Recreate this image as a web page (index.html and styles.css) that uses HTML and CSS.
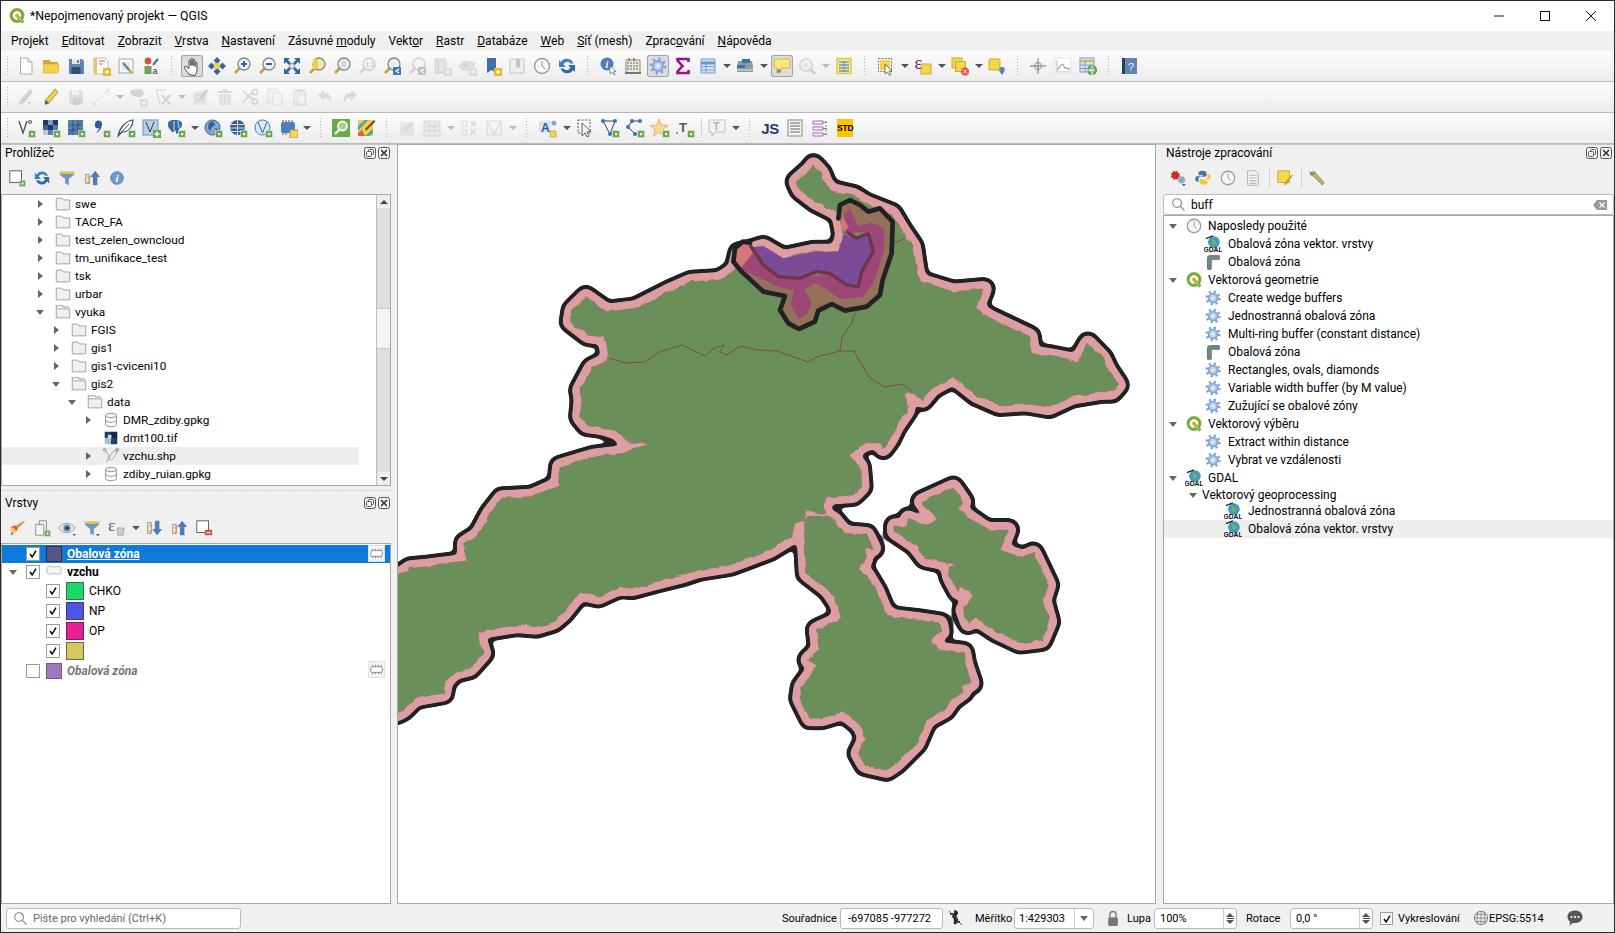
FILE: index.html
```html
<!DOCTYPE html>
<html lang="cs">
<head>
<meta charset="utf-8">
<title>*Nepojmenovaný projekt — QGIS</title>
<link rel="stylesheet" href="styles.css">
</head>
<body>
<svg class="defs" width="0" height="0">
<defs>
<symbol id="bg" viewBox="0 0 20 20"><rect x="12.500" y="12.500" width="7" height="7" fill="#6aa84f" stroke="#dfe8d8" stroke-width=".6"/><rect x="15" y="15" width="2.200" height="2.200" fill="#fff"/></symbol>
<symbol id="bgold" viewBox="0 0 20 20"><rect x="12" y="12" width="8" height="8" fill="#e5b92e"/><circle cx="16" cy="16" r="1.800" fill="#fff"/></symbol>
<symbol id="logo" viewBox="0 0 20 20"><circle cx="10" cy="9.500" r="6.500" fill="#fff" stroke="#7cae3a" stroke-width="3.600"/><path d="M11 11l6 6" stroke="#7cae3a" stroke-width="3.400"/><circle cx="10" cy="9.500" r="2.200" fill="#e8a33a"/><path d="M12 12l3 3" stroke="#fff" stroke-width="1"/></symbol>
<symbol id="new" viewBox="0 0 20 20"><path d="M4.500 2h7.500l4 4v12H4.500z" fill="#fff" stroke="#aaa"/><path d="M12 2v4h4" fill="#eee" stroke="#aaa"/></symbol>
<symbol id="open" viewBox="0 0 20 20"><path d="M2 4h6l2 2h7v3H2z" fill="#d6a52a"/><path d="M2 17l1-9h15l-1 9z" fill="#f7d04e" stroke="#d3a92e" stroke-width=".6"/></symbol>
<symbol id="save" viewBox="0 0 20 20"><path d="M3 3h13l2 2v13H3z" fill="#5f86b6"/><path d="M6 3h8v5H6z" fill="#e1e8f1"/><path d="M5.500 11h9v7h-9z" fill="#2e4e76"/><path d="M11 4h2v3h-2z" fill="#5f86b6"/></symbol>
<symbol id="saveas" viewBox="0 0 20 20"><path d="M3 2h11l3 3v13H3z" fill="#fff" stroke="#bbb"/><path d="M3 2h3v16H3z" fill="#e7c75a"/><path d="M8 5h6M8 8h4" stroke="#c55" stroke-width="1"/><use href="#bgold"/></symbol>
<symbol id="layout" viewBox="0 0 20 20"><path d="M3 3h14v14H3z" fill="#f8f8f8" stroke="#9aa"/><path d="M6 6h8v8H6z" fill="#dde6f2"/><path d="M7 7l7 8" stroke="#777" stroke-width="2"/><path d="M13 14l3 3" stroke="#c9a227" stroke-width="2"/></symbol>
<symbol id="style" viewBox="0 0 20 20"><circle cx="7" cy="5" r="3.400" fill="#c9583a"/><rect x="3.500" y="10" width="7" height="8" fill="#6e9f64"/><path d="M12 9l5-6" stroke="#3a6ea5" stroke-width="2"/><text x="11.500" y="18" font-size="9" font-family="Liberation Sans" fill="#333">a</text></symbol>
<symbol id="pan" viewBox="0 0 20 20"><path d="M7 18.500c-1-2.500-4.500-5-4.500-7.300 0-1 1.500-1.200 2.500-.2L7 12.500V5c0-1.400 2-1.400 2 0v4.500-6c0-1.400 2-1.400 2 0v6-5c0-1.400 2-1.400 2 0v6-3c0-1.300 2-1.300 2 0v6.500c0 2-1 3.500-2 5.500z" fill="#fff" stroke="#333" stroke-width=".9"/></symbol>
<symbol id="pansel" viewBox="0 0 20 20"><path d="M10 1l3.500 3.500L10 8 6.500 4.500zM10 12l3.500 3.500L10 19l-3.500-3.500zM1 10l3.500-3.500L8 10l-3.500 3.500zM12 10l3.500-3.500L19 10l-3.500 3.500z" fill="#2f66ad"/><rect x="7" y="7" width="6" height="6" fill="#f3d34a"/></symbol>
<symbol id="mag" viewBox="0 0 20 20"><path d="M8 12l-5 5" stroke="#c3a13a" stroke-width="2.600"/><circle cx="12" cy="8" r="6" fill="#eaf0f7" stroke="#888" stroke-width="1.300"/></symbol>
<symbol id="zin" viewBox="0 0 20 20"><use href="#mag"/><path d="M9 8h6M12 5v6" stroke="#2f66ad" stroke-width="2"/></symbol>
<symbol id="zout" viewBox="0 0 20 20"><use href="#mag"/><path d="M9 8h6" stroke="#2f66ad" stroke-width="2"/></symbol>
<symbol id="zfull" viewBox="0 0 20 20"><path d="M2 2h6L6 4l3 3-2 2-3-3-2 2zM18 2v6l-2-2-3 3-2-2 3-3-2-2zM2 18v-6l2 2 3-3 2 2-3 3 2 2zM18 18h-6l2-2-3-3 2-2 3 3 2-2z" fill="#2f66ad"/><circle cx="10" cy="10" r="2.500" fill="#eaf0f7" stroke="#888"/></symbol>
<symbol id="zsel" viewBox="0 0 20 20"><path d="M8 12l-5 5" stroke="#c3a13a" stroke-width="2.600"/><circle cx="12" cy="8" r="6" fill="#f4e7a8" stroke="#888" stroke-width="1.300"/><path d="M6 3h5v10H6z" fill="#f0cf44"/></symbol>
<symbol id="zlay" viewBox="0 0 20 20"><use href="#mag"/><path d="M9 5h5v6H9z" fill="#cfd6dc"/></symbol>
<symbol id="znat" viewBox="0 0 20 20"><use href="#mag"/><text x="8.500" y="10.500" font-size="6.500" font-family="Liberation Sans" fill="#555">1:1</text></symbol>
<symbol id="zlast" viewBox="0 0 20 20"><use href="#mag"/><rect x="11" y="11" width="8" height="8" fill="#3b78bd"/><path d="M17 13l-3 2 3 2" fill="none" stroke="#fff" stroke-width="1.300"/></symbol>
<symbol id="mapv" viewBox="0 0 20 20"><path d="M3 3h11v14H3z" fill="#c9c9c9" stroke="#999"/><path d="M3 3c2-1 3 0 3 2v12" fill="none" stroke="#888"/><use href="#bgold"/></symbol>
<symbol id="map3d" viewBox="0 0 20 20"><path d="M2 10l6-5 10 2-3 7H5z" fill="#bdbdbd" stroke="#999"/><path d="M6 9l7 1M9 6l-2 7" stroke="#8a8a8a" stroke-width=".8"/><use href="#bgold"/></symbol>
<symbol id="bm" viewBox="0 0 20 20"><path d="M5 2h9v15l-4.500-3L5 17z" fill="#3f6ea8"/><use href="#bgold"/></symbol>
<symbol id="bmv" viewBox="0 0 20 20"><path d="M3 3h14v14H3z" fill="#e7e7e7" stroke="#777"/><path d="M9 3h4v9l-2-1.500L9 12z" fill="#3f6ea8"/></symbol>
<symbol id="clock" viewBox="0 0 20 20"><circle cx="10" cy="10" r="7.500" fill="#f7f7f7" stroke="#9b9b9b" stroke-width="1.400"/><path d="M10 5v5l3 3" fill="none" stroke="#8a8a8a"/></symbol>
<symbol id="refresh" viewBox="0 0 20 20"><path d="M16.500 7.500A7 7 0 0 0 4 6L2 4v7h7L6.500 8.500a4 4 0 0 1 7-1z" fill="#3b82c4"/><path d="M3.500 12.500A7 7 0 0 0 16 14l2 2V9h-7l2.500 2.500a4 4 0 0 1-7 1z" fill="#2a6ba8"/></symbol>
<symbol id="info" viewBox="0 0 20 20"><circle cx="9" cy="8" r="6.500" fill="#4a7fb9"/><text x="9" y="12" text-anchor="middle" font-size="10" font-weight="700" font-family="Liberation Serif" font-style="italic" fill="#fff">i</text><path d="M12 10v8l2-2 2 3 1-.6-1.500-2.800 2.500-.3z" fill="#fff" stroke="#666" stroke-width=".7"/></symbol>
<symbol id="infoc" viewBox="0 0 20 20"><circle cx="10" cy="10" r="7" fill="#6f9bcb" stroke="#4a7fb9"/><text x="10" y="14.500" text-anchor="middle" font-size="12" font-weight="700" font-family="Liberation Serif" font-style="italic" fill="#fff">i</text></symbol>
<symbol id="calc" viewBox="0 0 20 20"><path d="M3 4h14v13H3z" fill="#efe9dd" stroke="#888"/><path d="M4 7h12M4 10h12M4 13h12" stroke="#7a9a6a" stroke-width="1.400" stroke-dasharray="2 1"/><path d="M2 16h16v2H2z" fill="#777"/><path d="M6 2v3M11 2v3" stroke="#b44" stroke-width="1.400"/></symbol>
<symbol id="gearb" viewBox="0 0 20 20"><circle cx="10" cy="10" r="7" fill="none" stroke="#7ea3d4" stroke-width="2.800" stroke-dasharray="2.400 3.100"/><circle cx="10" cy="10" r="5" fill="#b9cfea" stroke="#7ea3d4" stroke-width="1.800"/><circle cx="10" cy="10" r="1.800" fill="#eef3fa"/></symbol>
<symbol id="sigma" viewBox="0 0 20 20"><path d="M15.500 6V3h-11v1.500l5 5.500-5 5.500V17h11v-3" fill="none" stroke="#94148c" stroke-width="2.600"/></symbol>
<symbol id="table" viewBox="0 0 20 20"><rect x="3" y="3" width="14" height="14" fill="#d5e3f3" stroke="#7ba0ca"/><path d="M3 7h14" stroke="#6d97c8" stroke-width="3"/><path d="M3 10.500h14M3 14h14M8 7v10" stroke="#7ba0ca"/></symbol>
<symbol id="toolbox" viewBox="0 0 20 20"><path d="M3 5h14l1 5v6H2v-6z" fill="#8f9aa6"/><path d="M2 9h8v3H2z" fill="#3b6fa8"/><path d="M7 3h8v4H7z" fill="#3b6fa8"/><path d="M2 14h16" stroke="#dfe3e8"/></symbol>
<symbol id="tips" viewBox="0 0 20 20"><path d="M3 3h14a1 1 0 0 1 1 1v7a1 1 0 0 1-1 1H9l-4 5v-5H3a1 1 0 0 1-1-1V4a1 1 0 0 1 1-1z" fill="#fbe676" stroke="#c9b44a"/><circle cx="7" cy="15" r="2" fill="#7e9a4d"/></symbol>
<symbol id="search" viewBox="0 0 20 20"><path d="M13 13l5 5" stroke="#888" stroke-width="2.600"/><circle cx="9" cy="9" r="6" fill="#eee" stroke="#aaa" stroke-width="2"/><circle cx="9" cy="9" r="2.500" fill="#ccc"/></symbol>
<symbol id="attr" viewBox="0 0 20 20"><rect x="3" y="2.500" width="14" height="15" fill="#f9e98e" stroke="#e0c83a" stroke-width="1.400"/><path d="M5 6h10M5 9h10M5 12h10M5 15h10" stroke="#6e97c6" stroke-width="1.300"/><path d="M10 5v11" stroke="#6e97c6"/></symbol>
<symbol id="selr" viewBox="0 0 20 20"><rect x="2.500" y="2.500" width="13" height="13" fill="none" stroke="#777" stroke-dasharray="2 1.200"/><rect x="4" y="4" width="10" height="10" fill="#f3d64a"/><path d="M9 8v10l2.500-2 2 3.500 1.500-1-2-3.300 3-.3z" fill="#fff" stroke="#555" stroke-width=".8"/></symbol>
<symbol id="eps" viewBox="0 0 20 20"><rect x="8" y="8" width="10" height="10" fill="#f3d64a" stroke="#c9ad2e"/><text x="1.500" y="13" font-size="18" font-family="Liberation Serif" fill="#7a1f7a">ε</text></symbol>
<symbol id="desel" viewBox="0 0 20 20"><rect x="2" y="2" width="10" height="10" fill="#f3d64a" stroke="#c9ad2e"/><rect x="5.500" y="5.500" width="10" height="10" fill="#f3d64a" stroke="#c9ad2e"/><circle cx="15" cy="15.500" r="4" fill="#e25449"/><path d="M13 13.500l4 4M17 13.500l-4 4" stroke="#fff"/></symbol>
<symbol id="locate" viewBox="0 0 20 20"><rect x="2" y="3" width="11" height="11" rx="1" fill="#f3d64a" stroke="#c9ad2e"/><path d="M15 11a2.800 2.800 0 0 1 2.800 2.800c0 2-2.800 5.200-2.800 5.200s-2.800-3.200-2.800-5.200A2.800 2.800 0 0 1 15 11z" fill="#5a87a8"/></symbol>
<symbol id="cross" viewBox="0 0 20 20"><circle cx="10" cy="10" r="3.500" fill="none" stroke="#c97a7a"/><path d="M10 2v16M2 10h16" stroke="#777"/></symbol>
<symbol id="profile" viewBox="0 0 20 20"><rect x="2" y="2" width="16" height="16" fill="#fff" stroke="#e4e4e4"/><path d="M4 14c3-1 3-6 5-6s2 5 4 4 2 2 4 1" fill="none" stroke="#7fae7a" stroke-width="1.200"/><path d="M4 4v12h13" fill="none" stroke="#bbb"/></symbol>
<symbol id="tabref" viewBox="0 0 20 20"><rect x="2" y="2" width="14" height="14" fill="#d5e3f3" stroke="#7ba0ca"/><path d="M2 5h14" stroke="#e2b33a" stroke-width="2"/><path d="M2 9h14M2 12.500h14M7 5v11" stroke="#7ba0ca"/><circle cx="14" cy="14" r="4" fill="none" stroke="#5aa32f" stroke-width="2" stroke-dasharray="5 1.500"/></symbol>
<symbol id="help" viewBox="0 0 20 20"><rect x="2" y="2" width="4" height="16" fill="#2b3f5c"/><rect x="5" y="2" width="12" height="16" fill="#5f85b5"/><text x="11" y="14.500" text-anchor="middle" font-size="11" font-family="Liberation Sans" fill="#e7eef7">?</text></symbol>
<symbol id="pen" viewBox="0 0 20 20"><path d="M14 2l3 3-9 11-4 1.500L4.500 13z" fill="#f1cd4c" stroke="#a5882c" stroke-width=".8"/><path d="M4.500 13L8 16l-4 1.500z" fill="#555"/></symbol>
<symbol id="editc" viewBox="0 0 20 20"><path d="M14 2l3 3-9 11-5 1.500L4.500 13z" fill="#999"/><path d="M12 15l3 0-1.500 2z" fill="#555"/></symbol>
<symbol id="saved" viewBox="0 0 20 20"><path d="M3 3h13l1 1v13H3z" fill="#b9b9b9"/><path d="M6 3h7v5H6z" fill="#eee"/><path d="M7 11h7l3 3-4 4H7z" fill="#8f8f8f"/></symbol>
<symbol id="digit" viewBox="0 0 20 20"><path d="M3 17L17 3" stroke="#999" stroke-dasharray="3 2"/><circle cx="3" cy="17" r="1.500" fill="#bbb"/><circle cx="17" cy="3" r="1.500" fill="#bbb"/></symbol>
<symbol id="addp" viewBox="0 0 20 20"><path d="M2 4c3-2 10-3 13 0s-2 7-6 6-8-3-7-6z" fill="#9a9a9a"/><use href="#bgold"/></symbol>
<symbol id="vert" viewBox="0 0 20 20"><path d="M3 3h10M3 3l4 14" fill="none" stroke="#888"/><path d="M9 8l8 9M17 8l-8 9" stroke="#999" stroke-width="2"/></symbol>
<symbol id="edita" viewBox="0 0 20 20"><path d="M3 4h14v14H3z" fill="#ccc"/><path d="M5 8h10M5 11h10M5 14h10" stroke="#999"/><path d="M16 2l2 2-6 8-3 1 1-3z" fill="#888"/></symbol>
<symbol id="trash" viewBox="0 0 20 20"><path d="M3 4h14v2H3zM8 2h4v2H8z" fill="#b59a9a"/><path d="M4.500 7h11v11h-11z" fill="#cbb8b8"/><path d="M8 8v9M12 8v9" stroke="#f0f0f0"/></symbol>
<symbol id="cut" viewBox="0 0 20 20"><path d="M3 4l10 9M3 15l10-10" stroke="#999" stroke-width="1.500"/><circle cx="15" cy="14.500" r="2.600" fill="none" stroke="#999" stroke-width="1.500"/><circle cx="15" cy="5" r="2.600" fill="none" stroke="#999" stroke-width="1.500"/></symbol>
<symbol id="copy" viewBox="0 0 20 20"><path d="M3 2h8l2 2v12H3z" fill="#eee" stroke="#bbb"/><path d="M8 6h7l2 2v10H8z" fill="#f6f6f6" stroke="#bbb"/></symbol>
<symbol id="paste" viewBox="0 0 20 20"><path d="M4 3h12v15H4z" fill="#ddd" stroke="#aaa"/><path d="M7 2h6v3H7z" fill="#aaa"/><path d="M8 8h7v9H8z" fill="#f6f6f6" stroke="#bbb"/></symbol>
<symbol id="undo" viewBox="0 0 20 20"><path d="M3 8l6-5v3c5 0 8 3 7 10-1-4-3-5-7-5v3z" fill="#aaa"/></symbol>
<symbol id="redo" viewBox="0 0 20 20"><path d="M17 8l-6-5v3c-5 0-8 3-7 10 1-4 3-5 7-5v3z" fill="#aaa"/></symbol>
<symbol id="vect" viewBox="0 0 20 20"><path d="M3 3l4 12 4-12" fill="none" stroke="#4a4a4a" stroke-width="1.300"/><circle cx="14" cy="4" r="1.500" fill="none" stroke="#4a4a4a"/><use href="#bg"/></symbol>
<symbol id="rast" viewBox="0 0 20 20"><path d="M2 2h5v5H2zM12 2h5v5h-5zM7 7h5v5H7z" fill="#1f3a63"/><path d="M7 2h5v5H7z" fill="#7d9bc4"/><path d="M2 7h5v5H2z" fill="#3d5f93"/><path d="M12 7h5v5h-5zM7 12h5v5H7z" fill="#5a7cae"/><path d="M2 12h5v5H2z" fill="#b8cbe3"/><use href="#bg"/></symbol>
<symbol id="mesh" viewBox="0 0 20 20"><rect x="2" y="2" width="15" height="15" fill="#5a82b5"/><path d="M2 7h15M2 12h15M7 2v15M12 2v15M2 17L17 2" stroke="#2c4a76" stroke-width=".8"/><use href="#bg"/></symbol>
<symbol id="spat" viewBox="0 0 20 20"><path d="M4 6a3.500 3.500 0 0 1 7 0c0 4-3 8-6 9 2-2 3-4 3-5a3 3 0 0 1-4-4z" fill="#2f5f96"/><use href="#bg"/></symbol>
<symbol id="feath" viewBox="0 0 20 20"><path d="M2 18C4 9 10 3 17 2c0 6-4 12-11 12z" fill="#fff" stroke="#2d4f76" stroke-width="1.100"/><path d="M2 18L13 6" stroke="#2d4f76"/><use href="#bg"/></symbol>
<symbol id="virt" viewBox="0 0 20 20"><rect x="2" y="2" width="15" height="15" fill="#b9d0e8" stroke="#6f93b8"/><path d="M5 4l4 10 4-10" fill="none" stroke="#333"/><rect x="12" y="12" width="8" height="8" fill="#6aa84f"/><path d="M16 13.500v5M13.500 16h5" stroke="#fff" stroke-width="1.400"/></symbol>
<symbol id="pg" viewBox="0 0 20 20"><path d="M2 6c0-3 3-4 6-4s8 0 8 4-2 4-3 5c0 2-1 5-2 5s-1-3-2-4c-1 1-2 3-3 2S4 11 3 10s-1-2-1-4z" fill="#33699a"/><path d="M8 3v9M12 3c0 3 1 5 1 7" stroke="#fff" stroke-width=".8"/><use href="#bg"/></symbol>
<symbol id="globe" viewBox="0 0 20 20"><circle cx="9.500" cy="9.500" r="7.500" fill="#7fa8d4" stroke="#3a6494"/><path d="M6 5l4-2 2 4-3 2-2 4-2-3zM12 10l3 1-2 4z" fill="#3a5f8c"/></symbol>
<symbol id="wms" viewBox="0 0 20 20"><use href="#globe"/><use href="#bg"/></symbol>
<symbol id="wcs" viewBox="0 0 20 20"><circle cx="9.500" cy="9.500" r="7.500" fill="#36608f"/><path d="M3 6.500h13M2 10h15M3.500 13.500h12" stroke="#d4e2f0"/><path d="M9.500 2v15" stroke="#d4e2f0"/><use href="#bg"/></symbol>
<symbol id="wfs" viewBox="0 0 20 20"><circle cx="9.500" cy="9.500" r="7.500" fill="#dce8f4" stroke="#4a7ab0"/><path d="M5 4l4.500 11L14 4" fill="none" stroke="#3a5f8c"/><use href="#bg"/></symbol>
<symbol id="chip" viewBox="0 0 20 20"><rect x="3" y="4" width="14" height="11" rx="2" fill="#4c7fbf"/><path d="M5 2v2M8 2v2M11 2v2M14 2v2M5 15v2M8 15v2" stroke="#555"/><rect x="12" y="12" width="8" height="8" fill="#f6d860" stroke="#b8942a"/></symbol>
<symbol id="qsearch" viewBox="0 0 20 20"><rect x="1" y="1" width="18" height="18" fill="#65ad3f"/><circle cx="11.500" cy="8" r="4.500" fill="#a6d189" stroke="#fff" stroke-width="1.800"/><path d="M8 12l-4 4" stroke="#fff" stroke-width="2.400"/></symbol>
<symbol id="brush" viewBox="0 0 20 20"><rect x="2" y="2" width="15" height="16" fill="#f2cf3c"/><path d="M2 8l7-6h3L2 13zM9 18l8-7v4l-4 3z" fill="#4aa0c9"/><path d="M2 15l4-3 3 6H2z" fill="#d8634a"/><path d="M18 2l1.500 1.500L11 12l-2 .5.500-2z" fill="#7a4a1f"/></symbol>
<symbol id="dpen" viewBox="0 0 20 20"><rect x="3" y="4" width="14" height="14" fill="#ccc"/><path d="M5 12l9-9 3 3-9 9z" fill="#aaa" stroke="#eee" stroke-width=".6"/></symbol>
<symbol id="dgrid" viewBox="0 0 20 20"><rect x="2" y="3" width="16" height="15" fill="#ddd" stroke="#aaa"/><path d="M2 8h16M2 13h16M7 3v15M13 3v15" stroke="#aaa"/><path d="M3 4l9 6 5-5" fill="none" stroke="#999"/></symbol>
<symbol id="dnode" viewBox="0 0 20 20"><path d="M3 3h5v5H3zM3 12h5v5H3z" fill="none" stroke="#aaa"/><path d="M12 3h5v5h-5z" fill="#bbb"/><path d="M11 11l6 6M17 11l-6 6" stroke="#aaa" stroke-width="1.500"/></symbol>
<symbol id="dmesh" viewBox="0 0 20 20"><path d="M3 3h14v14H3zM3 3l7 14 7-14" fill="none" stroke="#aaa" stroke-width="1.200"/></symbol>
<symbol id="lab" viewBox="0 0 20 20"><rect x="1" y="3" width="12" height="12" fill="#d5e3f3"/><text x="3" y="14" font-size="12" font-weight="700" font-family="Liberation Sans" fill="#2f5f96">A</text><rect x="12" y="13" width="6" height="6" fill="#f3d64a" stroke="#b8942a" stroke-width=".6"/><circle cx="16" cy="5" r="2.500" fill="#88a9d1"/></symbol>
<symbol id="lsel" viewBox="0 0 20 20"><rect x="3" y="2" width="12" height="13" fill="none" stroke="#555" stroke-dasharray="2 1.500"/><path d="M7 5v13l3-3 2 4 2-1-2-4 4-.5z" fill="#f2f2f2" stroke="#444" stroke-width=".8"/></symbol>
<symbol id="npoly" viewBox="0 0 20 20"><path d="M3 3h12l-5 13z" fill="none" stroke="#444"/><g fill="#2d6fd0"><circle cx="3" cy="3" r="2"/><circle cx="15" cy="3" r="2"/><circle cx="10" cy="16" r="2"/></g><use href="#bg"/></symbol>
<symbol id="nline" viewBox="0 0 20 20"><path d="M15 3H7L3 9l7 7" fill="none" stroke="#444"/><g fill="#2d6fd0"><circle cx="15" cy="3" r="2"/><circle cx="7" cy="3" r="2"/><circle cx="3" cy="9" r="2"/><circle cx="10" cy="16" r="2"/></g><use href="#bg"/></symbol>
<symbol id="star" viewBox="0 0 20 20"><path d="M9 1l2.500 6 6.500.5-5 4 1.500 6.500L9 14.500 3.500 18 5 11.500l-5-4 6.500-.5z" fill="#f8d78e" stroke="#c9a85a" stroke-width=".7"/><use href="#bg"/></symbol>
<symbol id="ttool" viewBox="0 0 20 20"><text x="4" y="14" font-size="13" font-weight="700" font-family="Liberation Sans" fill="#555">T</text><circle cx="2" cy="15" r="1" fill="#777"/><use href="#bg"/></symbol>
<symbol id="tann" viewBox="0 0 20 20"><path d="M2 2h16v12H8l-3 4v-4H2z" fill="#f3f3f3" stroke="#999"/><text x="6" y="12" font-size="11" font-weight="700" font-family="Liberation Sans" fill="#777">T</text></symbol>
<symbol id="lst" viewBox="0 0 20 20"><rect x="3" y="2" width="14" height="16" fill="#f4f4f4" stroke="#888"/><path d="M5 5h10M5 8h10M5 11h10M5 14h10" stroke="#666"/></symbol>
<symbol id="tree" viewBox="0 0 20 20"><path d="M3 3h10v3H3zM3 9h10v3H3zM3 15h10v3H3z" fill="#fff" stroke="#b05cc4"/><path d="M13 4.500h4M13 10.500h4M13 16.500h4" stroke="#5aa34a"/><path d="M16 3v15" stroke="#5aa34a" stroke-dasharray="2 2"/></symbol>
<symbol id="dadd" viewBox="0 0 20 20"><rect x="2" y="2" width="13" height="13" fill="#fff" stroke="#555"/><use href="#bg"/></symbol>
<symbol id="funnel" viewBox="0 0 20 20"><path d="M2 3h16v3l-6 5v7l-4-2v-5L2 6z" fill="#6e97c6"/><path d="M2 3h16v2.500H2z" fill="#e6c23a"/></symbol>
<symbol id="collapse" viewBox="0 0 20 20"><path d="M3 6h4v10H3z" fill="none" stroke="#888"/><rect x="5" y="8" width="3" height="3" fill="#e8a33a"/><rect x="5" y="13" width="3" height="3" fill="#e8a33a"/><path d="M8 9l5.500-7L19 9h-3v9h-5V9z" fill="#4a7fb9"/></symbol>
<symbol id="expand" viewBox="0 0 20 20"><path d="M3 4h4v12H3z" fill="none" stroke="#888"/><rect x="5" y="6" width="3" height="3" fill="#e8a33a"/><rect x="5" y="12" width="3" height="3" fill="#e8a33a"/><path d="M8 11l5.500 7L19 11h-3V2h-5v9z" fill="#4a7fb9"/></symbol>
<symbol id="broom" viewBox="0 0 20 20"><path d="M8 8l10-6 .5 1L10 11z" fill="#c9983a"/><path d="M3 9l5-2 3 4-4 5z" fill="#e2574c"/><path d="M2 12l3-3 5 5-4 2z" fill="#f3c94a"/><path d="M4 14l2 3-3 1z" fill="#3b78bd"/></symbol>
<symbol id="addgrp" viewBox="0 0 20 20"><path d="M7 2h8v13H7z" fill="#eee" stroke="#888"/><path d="M3 6h9v12H3z" fill="#f4f4f4" stroke="#888"/><use href="#bg"/></symbol>
<symbol id="eye" viewBox="0 0 20 20"><path d="M1 10c4-7 14-7 18 0-4 7-14 7-18 0z" fill="#e6e6e6" stroke="#999"/><circle cx="10" cy="10" r="4" fill="#5a87b8"/><circle cx="10" cy="10" r="1.800" fill="#333"/><path d="M16 17h4l-2 2z" fill="#444"/></symbol>
<symbol id="funnel2" viewBox="0 0 20 20"><use href="#funnel"/><path d="M14 17h5l-2.500 2z" fill="#444"/></symbol>
<symbol id="epsf" viewBox="0 0 20 20"><path d="M10 10h8l-1 8h-6z" fill="#ccc" stroke="#aaa"/><text x="0" y="13" font-size="19" font-family="Liberation Serif" fill="#7a3f8a">ε</text></symbol>
<symbol id="rem" viewBox="0 0 20 20"><rect x="2" y="2" width="13" height="13" fill="#fff" stroke="#555"/><rect x="11" y="12" width="8" height="6" fill="#e04b3f"/><rect x="13" y="14.300" width="4" height="1.500" fill="#fff"/></symbol>
<symbol id="fold" viewBox="0 0 20 20"><path d="M2.500 3.500h6l1.500 2h7.500v11h-15z" fill="#f0f0f0" stroke="#9a9a9a"/></symbol>
<symbol id="folde" viewBox="0 0 20 20"><path d="M2.500 6.500h15v10h-15z" fill="#f0f0f0" stroke="#9a9a9a"/><path d="M2.500 6V3h7l1 1.500h6" fill="none" stroke="#9a9a9a" stroke-width="1.200"/></symbol>
<symbol id="gpkg" viewBox="0 0 20 20"><ellipse cx="10" cy="5" rx="6" ry="2.500" fill="#f2f2f2" stroke="#8a8a8a"/><path d="M4 5v10c0 3.300 12 3.300 12 0V5M4 10c0 3.300 12 3.300 12 0" fill="none" stroke="#8a8a8a"/></symbol>
<symbol id="tif" viewBox="0 0 20 20"><path d="M3 3h7v7H3zM10 10h7v7h-7z" fill="#233f6b"/><path d="M10 3h7v7h-7z" fill="#16294a"/><path d="M3 10h7v7H3z" fill="#a9bfdc"/><path d="M6.500 6.500h4v4h-4z" fill="#d5e0ee"/></symbol>
<symbol id="shp" viewBox="0 0 20 20"><path d="M3 3l5 7-3 7M17 3c-5 1-9 7-9 11 3 2 8-5 9-11z" fill="none" stroke="#999"/><circle cx="3" cy="3" r="1.500" fill="none" stroke="#888"/><circle cx="17" cy="3" r="1.500" fill="none" stroke="#888"/></symbol>
<symbol id="poly" viewBox="0 0 20 20"><path d="M1 7c0-3 3-5 6-4s5 1 8 0 4 1 4 4-1 6-3 6-5-2-7-1-8 3-8-5z" fill="#f4f4f4" stroke="#aaa"/></symbol>
<symbol id="chk" viewBox="0 0 14 14"><path d="M3.500 7l2.500 3.500L10.500 3" fill="none" stroke="#000" stroke-width="1.700"/></symbol>
<symbol id="memo" viewBox="0 0 18 18"><rect x=".5" y=".5" width="17" height="17" fill="#f4f4f4" stroke="#e0e0e0"/><rect x="3" y="6" width="12" height="6" rx="1" fill="#fff" stroke="#888"/><path d="M5 4v2M8 4v2M11 4v2M14 4v2M5 12v2M8 12v2M11 12v2M14 12v2" stroke="#888"/></symbol>
<symbol id="dockf" viewBox="0 0 12 12"><rect x=".5" y=".5" width="11" height="11" rx="2" fill="#f4f4f4" stroke="#555"/><rect x="4.500" y="2.500" width="5" height="5" rx="1" fill="none" stroke="#555"/><rect x="2.500" y="4.500" width="5" height="5" rx="1" fill="#f4f4f4" stroke="#555"/></symbol>
<symbol id="dockx" viewBox="0 0 12 12"><rect x=".5" y=".5" width="11" height="11" rx="2" fill="#f4f4f4" stroke="#555"/><path d="M3 3l6 6M9 3l-6 6" stroke="#333" stroke-width="1.600"/></symbol>
<symbol id="gears" viewBox="0 0 20 20"><circle cx="7" cy="7" r="4" fill="#d8281f" stroke="#d8281f" stroke-width="2" stroke-dasharray="1.800 1.400"/><circle cx="14" cy="12" r="3.500" fill="#8fa9c9" stroke="#8fa9c9" stroke-width="1.600" stroke-dasharray="1.600 1.300"/><path d="M14 17h5l-2.500 2z" fill="#444"/></symbol>
<symbol id="py" viewBox="0 0 20 20"><path d="M10 2c-4 0-5 1-5 3v2h5v1H3c-2 0-2 6 0 6h2v-3c0-2 1-2.500 3-2.500h4c1.500 0 2-1 2-2V5c0-2-1-3-4-3z" fill="#3b78ab"/><path d="M10 17.500c4 0 5-1 5-3v-2h-5v-1h7c2 0 2-6 0-6h-2v3c0 2-1 2.500-3 2.500H8c-1.500 0-2 1-2 2v1.500c0 2 1 3 4 3z" fill="#f3c83c"/></symbol>
<symbol id="doc" viewBox="0 0 20 20"><path d="M4 2h9l3 3v13H4z" fill="#f4f4f4" stroke="#aaa"/><path d="M6 7h8M6 10h8M6 13h8M6 16h8" stroke="#bbb" stroke-width="1.300"/></symbol>
<symbol id="ednote" viewBox="0 0 20 20"><rect x="2" y="2" width="13" height="13" fill="#f3d64a" stroke="#c9ad2e"/><path d="M18 6l1 1-7 10-3 1 .5-3z" fill="#c9a227"/></symbol>
<symbol id="wrench" viewBox="0 0 20 20"><path d="M2 6l3-3 3 1 10 11-2 3L6 8z" fill="#c9ad5a" stroke="#777" stroke-width=".7"/><path d="M2 3l3 3 3-3" fill="none" stroke="#777" stroke-width="1.300"/></symbol>
<symbol id="magx" viewBox="0 0 16 16"><circle cx="6.500" cy="6.500" r="4.700" fill="#fff" stroke="#888" stroke-width="1.200"/><path d="M10 10l4.500 4.500" stroke="#888" stroke-width="1.400"/></symbol>
<symbol id="clear" viewBox="0 0 16 12"><path d="M5 1h10v10H5L1 6z" fill="#999"/><path d="M7.500 3.500l5 5M12.500 3.500l-5 5" stroke="#fff" stroke-width="1.300"/></symbol>
<symbol id="gdal" viewBox="0 0 20 20"><circle cx="11" cy="8" r="6.500" fill="#3f9dbb"/><path d="M8 4l6 4-4 4z" fill="#7db35a"/><path d="M2 4l8-3" stroke="#222" stroke-width="1.300"/><text x="10" y="19" text-anchor="middle" font-size="7.500" font-weight="700" font-family="Liberation Sans" fill="#111">GDAL</text></symbol>
<symbol id="buf" viewBox="0 0 20 20"><path d="M4 18V5a2 2 0 0 1 2-2h11v4H9a1 1 0 0 0-1 1v10z" fill="#6f8a8a" stroke="#54696c"/></symbol>
<symbol id="nomap" viewBox="0 0 20 20"><path d="M10 2c3 1 4 3 2 5s2 3 1 6-3 4-4 3 1-4-1-6 0-3 1-4-1-3 1-4z" fill="#222"/><path d="M4 3l13 14" stroke="#555"/><path d="M5 6h4M11 14h4" stroke="#444" stroke-width="2"/></symbol>
<symbol id="lock" viewBox="0 0 16 20"><path d="M4.500 9V6a3.500 3.500 0 0 1 7 0v3" fill="none" stroke="#7f7f7f" stroke-width="1.600"/><rect x="2.500" y="9" width="11" height="10" rx="1.500" fill="#777"/></symbol>
<symbol id="earth" viewBox="0 0 18 18"><circle cx="9" cy="9" r="7.500" fill="#eee" stroke="#777"/><path d="M1.500 9h15M9 1.500v15M3 5h12M3 13h12M6 2c-2 4-2 10 0 14M12 2c2 4 2 10 0 14" fill="none" stroke="#777" stroke-width=".8"/></symbol>
<symbol id="msg" viewBox="0 0 18 18"><path d="M9 1.500c4.500 0 7.500 2.800 7.500 6.300s-3 6.300-7.500 6.300c-.8 0-1.500-.1-2.200-.2L3.500 16.500l.6-3.800C2.300 11.600 1.500 9.800 1.500 7.800 1.500 4.300 4.500 1.500 9 1.500z" fill="#575757"/><circle cx="5.500" cy="8" r="1.100" fill="#fff"/><circle cx="9" cy="8" r="1.100" fill="#fff"/><circle cx="12.500" cy="8" r="1.100" fill="#fff"/></symbol>
<symbol id="min" viewBox="0 0 12 12"><path d="M1 6h10" stroke="#111"/></symbol>
<symbol id="max" viewBox="0 0 12 12"><rect x="1.500" y="1.500" width="9" height="9" fill="none" stroke="#111"/></symbol>
<symbol id="cls" viewBox="0 0 12 12"><path d="M1 1l10 10M11 1L1 11" stroke="#111"/></symbol>
</defs>
</svg>

<div class="window">
  <header class="titlebar">
    <svg class="app-logo"><use href="#logo"/></svg>
    <span class="app-title">*Nepojmenovaný projekt — QGIS</span>
    <div class="winctl">
      <svg class="wc"><use href="#min"/></svg>
      <svg class="wc"><use href="#max"/></svg>
      <svg class="wc"><use href="#cls"/></svg>
    </div>
  </header>

  <nav class="menubar">
    <span>Pro<u>j</u>ekt</span><span><u>E</u>ditovat</span><span><u>Z</u>obrazit</span><span><u>V</u>rstva</span><span><u>N</u>astavení</span><span>Zásuvné <u>m</u>oduly</span><span>Vekt<u>o</u>r</span><span><u>R</u>astr</span><span><u>D</u>atabáze</span><span><u>W</u>eb</span><span><u>S</u>íť (mesh)</span><span>Zprac<u>o</u>vání</span><span><u>N</u>ápověda</span>
  </nav>

  <div class="toolbar">
    <i class="grip first"></i>
    <b class="t"><svg><use href="#new"/></svg></b><b class="t"><svg><use href="#open"/></svg></b><b class="t"><svg><use href="#save"/></svg></b><b class="t"><svg><use href="#saveas"/></svg></b><b class="t"><svg><use href="#layout"/></svg></b><b class="t"><svg><use href="#style"/></svg></b>
    <i class="grip"></i>
    <b class="t on"><svg><use href="#pan"/></svg></b><b class="t"><svg><use href="#pansel"/></svg></b><b class="t"><svg><use href="#zin"/></svg></b><b class="t"><svg><use href="#zout"/></svg></b><b class="t"><svg><use href="#zfull"/></svg></b><b class="t"><svg><use href="#zsel"/></svg></b><b class="t"><svg><use href="#zlay"/></svg></b><b class="t off"><svg><use href="#znat"/></svg></b><b class="t"><svg><use href="#zlast"/></svg></b><b class="t off"><svg><use href="#zlast"/></svg></b><b class="t off"><svg><use href="#mapv"/></svg></b><b class="t off"><svg><use href="#map3d"/></svg></b><b class="t"><svg><use href="#bm"/></svg></b><b class="t off"><svg><use href="#bmv"/></svg></b><b class="t"><svg><use href="#clock"/></svg></b><b class="t"><svg><use href="#refresh"/></svg></b>
    <i class="grip"></i>
    <b class="t"><svg><use href="#info"/></svg></b><b class="t"><svg><use href="#calc"/></svg></b><b class="t on"><svg><use href="#gearb"/></svg></b><b class="t"><svg><use href="#sigma"/></svg></b><b class="t"><svg><use href="#table"/></svg></b><i class="arr"></i><b class="t"><svg><use href="#toolbox"/></svg></b><i class="arr"></i><b class="t on"><svg><use href="#tips"/></svg></b><b class="t off"><svg><use href="#search"/></svg></b><i class="arr off"></i><b class="t"><svg><use href="#attr"/></svg></b>
    <i class="grip w17"></i>
    <b class="t"><svg><use href="#selr"/></svg></b><i class="arr"></i><b class="t"><svg><use href="#eps"/></svg></b><i class="arr"></i><b class="t"><svg><use href="#desel"/></svg></b><i class="arr"></i><b class="t"><svg><use href="#locate"/></svg></b>
    <i class="grip"></i>
    <b class="t"><svg><use href="#cross"/></svg></b><b class="t"><svg><use href="#profile"/></svg></b><b class="t"><svg><use href="#tabref"/></svg></b>
    <i class="grip w17"></i>
    <b class="t"><svg><use href="#help"/></svg></b>
  </div>

  <div class="toolbar">
    <i class="grip first"></i>
    <b class="t off"><svg><use href="#editc"/></svg></b><b class="t"><svg><use href="#pen"/></svg></b><b class="t off"><svg><use href="#saved"/></svg></b><b class="t off"><svg><use href="#digit"/></svg></b><i class="arr off"></i><b class="t off"><svg><use href="#addp"/></svg></b><b class="t off"><svg><use href="#vert"/></svg></b><i class="arr off"></i><b class="t off"><svg><use href="#edita"/></svg></b><b class="t off"><svg><use href="#trash"/></svg></b><b class="t off"><svg><use href="#cut"/></svg></b><b class="t off"><svg><use href="#copy"/></svg></b><b class="t off"><svg><use href="#paste"/></svg></b><b class="t off"><svg><use href="#undo"/></svg></b><b class="t off"><svg><use href="#redo"/></svg></b>
  </div>

  <div class="toolbar">
    <i class="grip first"></i>
    <b class="t"><svg><use href="#vect"/></svg></b><b class="t"><svg><use href="#rast"/></svg></b><b class="t"><svg><use href="#mesh"/></svg></b><b class="t"><svg><use href="#spat"/></svg></b><b class="t"><svg><use href="#feath"/></svg></b><b class="t"><svg><use href="#virt"/></svg></b><b class="t"><svg><use href="#pg"/></svg></b><i class="arr"></i><b class="t"><svg><use href="#wms"/></svg></b><b class="t"><svg><use href="#wcs"/></svg></b><b class="t"><svg><use href="#wfs"/></svg></b><b class="t"><svg><use href="#chip"/></svg></b><i class="arr"></i>
    <i class="grip"></i>
    <b class="t"><svg><use href="#qsearch"/></svg></b><b class="t"><svg><use href="#brush"/></svg></b>
    <i class="grip"></i>
    <b class="t off"><svg><use href="#dpen"/></svg></b><b class="t off"><svg><use href="#dgrid"/></svg></b><i class="arr off"></i><b class="t off"><svg><use href="#dnode"/></svg></b><b class="t off"><svg><use href="#dmesh"/></svg></b><i class="arr off"></i>
    <i class="grip w17"></i>
    <b class="t"><svg><use href="#lab"/></svg></b><i class="arr"></i><b class="t"><svg><use href="#lsel"/></svg></b><b class="t"><svg><use href="#npoly"/></svg></b><b class="t"><svg><use href="#nline"/></svg></b><b class="t"><svg><use href="#star"/></svg></b><b class="t"><svg><use href="#ttool"/></svg></b>
    <i class="vsep"></i>
    <b class="t"><svg class="dim"><use href="#tann"/></svg></b><i class="arr"></i>
    <i class="grip"></i>
    <b class="t"><span class="js">JS</span></b><b class="t"><svg><use href="#lst"/></svg></b><b class="t"><svg><use href="#tree"/></svg></b><b class="t"><span class="std">STD</span></b>
  </div>

  <main class="workspace">
    <aside class="left">
      <section class="dock browser">
        <div class="dock-title"><span>Prohlížeč</span><svg class="dk"><use href="#dockf"/></svg><svg class="dk"><use href="#dockx"/></svg></div>
        <div class="dock-tools">
          <b class="t"><svg><use href="#dadd"/></svg></b><b class="t"><svg><use href="#refresh"/></svg></b><b class="t"><svg><use href="#funnel"/></svg></b><b class="t"><svg><use href="#collapse"/></svg></b><b class="t"><svg><use href="#infoc"/></svg></b>
        </div>
        <div class="tree-frame">
          <ul class="tree">
            <li class="l0"><i class="tw r"></i><svg><use href="#fold"/></svg>swe</li>
            <li class="l0"><i class="tw r"></i><svg><use href="#fold"/></svg>TACR_FA</li>
            <li class="l0"><i class="tw r"></i><svg><use href="#fold"/></svg>test_zelen_owncloud</li>
            <li class="l0"><i class="tw r"></i><svg><use href="#fold"/></svg>tm_unifikace_test</li>
            <li class="l0"><i class="tw r"></i><svg><use href="#fold"/></svg>tsk</li>
            <li class="l0"><i class="tw r"></i><svg><use href="#fold"/></svg>urbar</li>
            <li class="l0"><i class="tw d"></i><svg><use href="#folde"/></svg>vyuka</li>
            <li class="l1"><i class="tw r"></i><svg><use href="#fold"/></svg>FGIS</li>
            <li class="l1"><i class="tw r"></i><svg><use href="#fold"/></svg>gis1</li>
            <li class="l1"><i class="tw r"></i><svg><use href="#fold"/></svg>gis1-cviceni10</li>
            <li class="l1"><i class="tw d"></i><svg><use href="#folde"/></svg>gis2</li>
            <li class="l2"><i class="tw d"></i><svg><use href="#folde"/></svg>data</li>
            <li class="l3"><i class="tw r"></i><svg><use href="#gpkg"/></svg>DMR_zdiby.gpkg</li>
            <li class="l3"><i class="tw"></i><svg><use href="#tif"/></svg>dmt100.tif</li>
            <li class="l3 hover"><i class="tw r"></i><svg><use href="#shp"/></svg>vzchu.shp</li>
            <li class="l3"><i class="tw r"></i><svg><use href="#gpkg"/></svg>zdiby_ruian.gpkg</li>
          </ul>
          <div class="scrollbar">
            <i class="sb-btn up"></i><i class="sb-track"></i><i class="sb-thumb"></i><i class="sb-track long"></i><i class="sb-btn dn"></i>
          </div>
        </div>
      </section>
      <div class="splitter"></div>
      <section class="dock layers">
        <div class="dock-title"><span>Vrstvy</span><svg class="dk"><use href="#dockf"/></svg><svg class="dk"><use href="#dockx"/></svg></div>
        <div class="dock-tools tools31">
          <b class="t"><svg><use href="#broom"/></svg></b><b class="t"><svg><use href="#addgrp"/></svg></b><b class="t"><svg><use href="#eye"/></svg></b><b class="t"><svg><use href="#funnel2"/></svg></b><b class="t"><svg><use href="#epsf"/></svg></b><i class="arr"></i><b class="t"><svg><use href="#expand"/></svg></b><b class="t"><svg><use href="#collapse"/></svg></b><b class="t"><svg><use href="#rem"/></svg></b>
        </div>
        <ul class="legend">
          <li class="lg sel h18"><span class="cb"><svg><use href="#chk"/></svg></span><i class="sym s-dark"></i><span class="lname">Obalová zóna</span><svg class="memo"><use href="#memo"/></svg></li>
          <li class="lg h18"><i class="tw d"></i><span class="cb"><svg><use href="#chk"/></svg></span><svg class="gico"><use href="#poly"/></svg><strong>vzchu</strong></li>
          <li class="lg sub"><span class="cb"><svg><use href="#chk"/></svg></span><i class="sw s-g"></i><span>CHKO</span></li>
          <li class="lg sub"><span class="cb"><svg><use href="#chk"/></svg></span><i class="sw s-b"></i><span>NP</span></li>
          <li class="lg sub"><span class="cb"><svg><use href="#chk"/></svg></span><i class="sw s-m"></i><span>OP</span></li>
          <li class="lg sub"><span class="cb"><svg><use href="#chk"/></svg></span><i class="sw s-y"></i></li>
          <li class="lg"><span class="cb"></span><i class="sym s-pur"></i><em>Obalová zóna</em><svg class="memo"><use href="#memo"/></svg></li>
        </ul>
      </section>
    </aside>

    <figure class="map">
      <svg class="mapsvg" viewBox="398 145 757 758" width="757" height="758">
        <defs>
          <filter id="rnd" filterUnits="userSpaceOnUse" x="340" y="120" width="830" height="810" color-interpolation-filters="sRGB"><feGaussianBlur stdDeviation="2"/><feComponentTransfer><feFuncA type="linear" slope="7" intercept="-3"/></feComponentTransfer></filter>
          <filter id="rough" filterUnits="userSpaceOnUse" x="340" y="120" width="830" height="810" color-interpolation-filters="sRGB"><feTurbulence type="fractalNoise" baseFrequency=".1" numOctaves="2" seed="4" result="n"/><feDisplacementMap in="SourceGraphic" in2="n" scale="5" xChannelSelector="R" yChannelSelector="G"/></filter>
          <path id="p1" d="M813.600 165L821.300 173.300 825.100 183.300 830.900 190.700 853.800 196 865.300 203.300 892.100 214 901.700 230 913.100 246.700 917 273.300 920.800 281.700 953.300 291.700 983.900 289 976.300 308.300 987.800 316.700 1008.800 326.700 1029.900 336.700 1031.800 353.300 1052.800 356.700 1077.700 361.700 1088 343.300 1102.600 358.300 1108 370 1118 385 1112 391.700 1102.600 391.700 1071.900 396.700 1049 407.300 1026 403.300 999.200 405 976.300 395 953.300 376.700 932.300 388.300 922.700 400 913 393.300 905.500 393.300 907.400 410 895.900 426.700 890 439 883.300 448.300 878.300 441.700 870 441.700 861.700 445 850 455 860 466.700 861.700 486.700 853.300 495 826.700 496.700 823.300 506.700 825 514 806.700 510 803.300 520 795 523.300 791.700 536.700 770 550 748.300 558.300 730 565 698.300 570 683.300 575 656.700 581.700 631.700 588.300 620 586.700 598.300 596.700 580 592.300 563.300 613.300 553.300 621.700 536.700 626.700 516.700 625 476.700 631.700 483.300 653.300 470 668.300 455 671.700 445 681.700 443.300 693.300 415 698.300 403.300 710 396.700 713.300 360 720 360 570 398 576.700 410 568.300 426.700 566.700 466.700 561.700 469.300 566 465 556.700 465 543.300 478.300 535 490 513.300 501.700 498.300 531.700 496.700 558.300 485 560 466.700 593.300 456.700 623.300 453.300 646.700 443.300 640 441.700 630 443.300 616.700 431.700 600 426.700 586.700 425 580 416.700 581.700 400 580 390 591.700 368 607 360.700 608.900 356.700 605 337.300 587.800 335 570.600 321.700 572.500 310 585.900 296.700 607 311.700 635.700 308.300 672 290 691.200 281.700 719.900 280 735.200 270 739 253.300 753.300 250 763.300 246.700 783.300 258.300 813.300 251.700 838.300 251.700 843.300 235 840 218 838.500 213.300 815.500 201.700 800.200 190 796.400 181.700 809.800 170Z"/>
          <path id="p2" d="M805 518.300L818.300 515 833.300 519.300 845 533.300 866.700 535 873.300 548.300 866 549.300 865 560 858.300 569.300 866.700 575 876.700 591.700 885 611.700 893.300 617.300 916.700 620 940 623.300 941.700 631.700 930.700 640 938.300 650 963.300 652.700 965 663.300 971.700 683.300 960 686.700 963.300 691.700 951.700 700 945 710 926.700 720 916.700 743.300 905 755 896.700 763.300 886.700 770 865 765 858.300 753.300 866 738.300 860 725 843.300 711.700 821.700 718.300 810 718.300 800 698.300 801.700 686.700 816.700 666.700 808.300 660 819.300 650 816.700 630 840 619.300 838.300 605 828.300 590 806.700 573.300 805 543.300 803.300 523.300Z"/>
          <path id="p3" d="M953.300 487.300L963.300 501.700 958.300 510 986.700 530 1008.300 530 1000 550 1023.300 558.300 1033.300 553.300 1048.300 585 1043.300 600 1049.300 621.700 1041.700 640 1020 642.700 996.700 631.700 976.700 618.300 968.300 623.300 963.300 610 973.300 595 960 586 958 591.700 950 576.700 948.300 566.700 958.300 565 941.700 561.700 925 558.300 915 545 895 531.700 895 526 906.700 528.300 908.300 518.300 923.300 525 938.300 520 921.700 501.700Z"/>
        </defs>
        <g class="m-black"><use href="#p1"/><use href="#p2"/><use href="#p3"/></g>
        <g class="m-pink"><use href="#p1"/><use href="#p2"/><use href="#p3"/></g>
        <g class="m-green"><use href="#p1"/><use href="#p2"/><use href="#p3"/></g>
        <path class="m-line" d="M609 358L626 363 645 362 659 352 682 345 705 356 714 348 724 345 720 352 726 355 741 346 758 350 777 351 808 362 817 357 840 351 854 351 869 377 884 387 902 384 913 392M860 308L854 315 852 323 842 337 840 351M894 243L904 239"/>
        <g transform="translate(700 190) scale(.3333)">
          <path class="o-brown" d="M128 155L105 175 100 215 125 245 190 305 255 318 240 360 265 400 297 417 345 395 355 362 395 342 435 362 500 350 540 315 548 270 575 190 578 95 540 55 505 65 480 45 450 30 420 45 415 85 435 130 510 125 520 190 485 250 475 295 440 290 390 250 300 265 235 260 190 225 155 170Z"/>
          <path class="o-mag" d="M150 180L118 235 160 255 235 290 282 300 272 345 297 388 322 370 335 335 312 300 345 278 375 295 420 328 490 320 525 270 552 180 552 115 515 98 475 108 450 55 432 72 442 110 432 130 510 125 520 190 485 250 475 295 440 290 390 250 300 265 235 260 190 225Z"/>
          <path class="o-red" d="M128 158L150 165 158 190 122 235 108 212 112 175ZM428 80L445 110 432 128 420 100Z"/>
          <path class="o-pur" d="M155 172L190 168 250 205 340 185 415 185 432 132 470 145 505 130 520 185 485 245 475 290 440 285 390 250 350 245 300 265 235 260 190 225Z"/>
          <path class="o-dark" d="M150 165L190 225 235 260 300 265 350 245 390 250 440 285 475 290 485 245 520 185 505 130 470 145 440 125"/>
          <path class="o-black" d="M150 158L128 155 105 175 100 215 125 245 190 305 255 318 240 360 265 400 297 417 345 395 355 362 395 342 435 362 500 350 540 315 548 270 575 190 578 95 540 55 505 65 480 45 450 30 420 45 415 85"/>
        </g>
      </svg>
    </figure>

    <aside class="right">
      <div class="dock-title"><span>Nástroje zpracování</span><svg class="dk"><use href="#dockf"/></svg><svg class="dk"><use href="#dockx"/></svg></div>
      <div class="dock-tools tools-r">
        <b class="t"><svg><use href="#gears"/></svg></b><b class="t"><svg><use href="#py"/></svg></b><b class="t"><svg><use href="#clock"/></svg></b><b class="t"><svg><use href="#doc"/></svg></b><i class="vsep"></i><b class="t"><svg><use href="#ednote"/></svg></b><i class="vsep"></i><b class="t"><svg><use href="#wrench"/></svg></b>
      </div>
      <div class="searchbox"><svg class="sico"><use href="#magx"/></svg><span class="stext">buff</span><svg class="sclear"><use href="#clear"/></svg></div>
      <ul class="ptree">
        <li class="p0"><i class="tw d"></i><svg><use href="#clock"/></svg>Naposledy použité</li>
        <li class="p1"><svg><use href="#gdal"/></svg>Obalová zóna vektor. vrstvy</li>
        <li class="p1"><svg><use href="#buf"/></svg>Obalová zóna</li>
        <li class="p0"><i class="tw d"></i><svg><use href="#logo"/></svg>Vektorová geometrie</li>
        <li class="p1"><svg><use href="#gearb"/></svg>Create wedge buffers</li>
        <li class="p1"><svg><use href="#gearb"/></svg>Jednostranná obalová zóna</li>
        <li class="p1"><svg><use href="#gearb"/></svg>Multi-ring buffer (constant distance)</li>
        <li class="p1"><svg><use href="#buf"/></svg>Obalová zóna</li>
        <li class="p1"><svg><use href="#gearb"/></svg>Rectangles, ovals, diamonds</li>
        <li class="p1"><svg><use href="#gearb"/></svg>Variable width buffer (by M value)</li>
        <li class="p1"><svg><use href="#gearb"/></svg>Zužující se obalové zóny</li>
        <li class="p0"><i class="tw d"></i><svg><use href="#logo"/></svg>Vektorový výběru</li>
        <li class="p1"><svg><use href="#gearb"/></svg>Extract within distance</li>
        <li class="p1"><svg><use href="#gearb"/></svg>Vybrat ve vzdálenosti</li>
        <li class="p0"><i class="tw d"></i><svg><use href="#gdal"/></svg>GDAL</li>
        <li class="pg"><i class="tw d"></i>Vektorový geoprocessing</li>
        <li class="p2"><svg><use href="#gdal"/></svg>Jednostranná obalová zóna</li>
        <li class="p2 hover"><svg><use href="#gdal"/></svg>Obalová zóna vektor. vrstvy</li>
      </ul>
    </aside>
  </main>

  <footer class="statusbar">
    <div class="locator"><svg class="sico"><use href="#magx"/></svg><span>Pište pro vyhledání (Ctrl+K)</span></div>
    <span class="st w58 ml-auto">Souřadnice</span>
    <span class="field f-coord">-697085 -977272</span>
    <svg class="st-ico"><use href="#nomap"/></svg>
    <span class="st w39 m10">Měřítko</span>
    <span class="field f-scale">1:429303<i class="combo"></i></span>
    <svg class="st-lock"><use href="#lock"/></svg>
    <span class="st w27">Lupa</span>
    <span class="field f-spin">100%<i class="spin"></i></span>
    <span class="st w39 m9">Rotace</span>
    <span class="field f-spin m5">0,0 °<i class="spin"></i></span>
    <span class="cb small"><svg><use href="#chk"/></svg></span>
    <span class="st w64">Vykreslování</span>
    <svg class="st-earth"><use href="#earth"/></svg>
    <span class="st w56">EPSG:5514</span>
    <svg class="st-msg"><use href="#msg"/></svg>
  </footer>
</div>
</body>
</html>
```

FILE: styles.css
```css
* { box-sizing: border-box; }
html, body { margin: 0; padding: 0; }
body { width: 1615px; height: 933px; overflow: hidden; font-family: "Roboto", "Liberation Sans", sans-serif; font-size: 12px; color: #000; background: #f0f0f0; }
.defs { position: absolute; }
ul { list-style: none; margin: 0; padding: 0; }
figure { margin: 0; }
b, i { font-weight: normal; font-style: normal; }

.window { width: 1615px; height: 933px; border: 1px solid #2a2a2a; display: flex; flex-direction: column; background: #f0f0f0; }

.titlebar { height: 30px; background: #fff; display: flex; align-items: center; flex: none; }
.app-logo { width: 18px; height: 18px; margin-left: 7px; }
.app-title { margin-left: 4px; font-size: 12.300px; }
.winctl { margin-left: auto; display: flex; gap: 34px; margin-right: 17px; }
.wc { width: 12px; height: 12px; }

.menubar { height: 20px; flex: none; display: flex; align-items: center; gap: 13px; padding: 0 0 1px 10px; background: #f0f0f0; white-space: nowrap; }

.toolbar { height: 31px; flex: none; display: flex; align-items: center; background: linear-gradient(#fcfcfc, #ececec); border-bottom: 1px solid #b9b9b9; }
.t { width: 25px; height: 22px; flex: none; display: flex; align-items: center; justify-content: center; }
.t svg { width: 20px; height: 20px; display: block; }
.t.on { box-shadow: inset 0 0 0 1px #a2a2a2; background: #dcdcdc; border-radius: 3px; width: 22px; margin: 0 1.500px; }
.t.off svg, .arr.off { opacity: .36; filter: grayscale(1); }
.t svg.dim { opacity: .55; }
.arr { width: 12px; height: 22px; flex: none; display: flex; align-items: center; justify-content: center; }
.arr::after { content: ""; border: 4px solid transparent; border-top: 4px solid #555; border-bottom: 0; }
.grip { width: 16px; height: 22px; flex: none; display: flex; justify-content: center; }
.grip::before { content: ""; width: 4px; height: 22px; background-image: radial-gradient(circle, #b4b4b4 .8px, transparent 1px); background-size: 3px 3px; }
.grip.first { width: 12.500px; justify-content: flex-start; padding-left: 5px; }
.grip.w17 { width: 17px; }
.vsep { width: 7px; height: 20px; flex: none; position: relative; display: block; }
.vsep::after { content: ""; display: block; width: 1px; height: 100%; margin: 0 auto; background: #d4d4d4; }
.js { font: 700 15px "Liberation Sans", sans-serif; color: #1c3f6e; letter-spacing: -.3px; }
.std { display: block; width: 16px; height: 18px; background: #ffc400; color: #000; font: 700 8.500px/18px "Liberation Sans", sans-serif; text-align: center; letter-spacing: -.2px; }

.workspace { height: 760px; flex: none; display: flex; box-shadow: inset 0 1px 0 #c4c4c4; }
.left { width: 390px; flex: none; display: flex; flex-direction: column; }
.dock-title { height: 18px; flex: none; display: flex; align-items: center; padding: 0 1px 0 4px; gap: 2px; }
.dock-title span { margin-right: auto; }
.dk { width: 12px; height: 12px; }
.dock-tools { height: 32px; flex: none; display: flex; align-items: center; padding-left: 3.500px; }
.dock-tools .t svg { width: 18px; height: 18px; }
.tools31 { height: 31px; }

.browser { height: 342px; flex: none; display: flex; flex-direction: column; }
.tree-frame { flex: 1; display: flex; border: 1px solid #a8a8a8; background: #fff; overflow: hidden; }
.tree { flex: 1; min-width: 0; font-size: 11.800px; }
.tree li { height: 18px; display: flex; align-items: center; white-space: nowrap; width: 357px; }
.tree li svg { width: 18px; height: 18px; margin-right: 3px; flex: none; }
.tree .l0 { padding-left: 34px; }
.tree .l1 { padding-left: 50px; }
.tree .l2 { padding-left: 66px; }
.tree .l3 { padding-left: 82px; }
.hover { background: #eeeeee; }
.tw { width: 11px; height: 10px; margin-right: 7px; flex: none; display: block; position: relative; }
.tw.r::after { content: ""; position: absolute; left: 2px; top: 1px; border: 4px solid transparent; border-left: 5px solid #666; border-right: 0; }
.tw.d::after { content: ""; position: absolute; left: 0; top: 3px; border: 4.500px solid transparent; border-top: 5px solid #666; border-bottom: 0; }

.scrollbar { width: 14px; flex: none; display: flex; flex-direction: column; border-left: 1px solid #bdbdbd; }
.sb-btn { height: 13px; flex: none; background: #eeeeee; display: flex; align-items: center; justify-content: center; }
.sb-btn.up::after { content: ""; border: 4px solid transparent; border-bottom: 4px solid #444; border-top: 0; }
.sb-btn.dn::after { content: ""; border: 4px solid transparent; border-top: 4px solid #444; border-bottom: 0; }
.sb-track { height: 100px; background: #dedede; flex: none; display: block; }
.sb-track.long { height: auto; flex: 1; }
.sb-thumb { height: 41px; background: #f4f4f4; flex: none; border-top: 1px solid #c8c8c8; border-bottom: 1px solid #c8c8c8; display: block; }

.splitter { height: 8px; flex: none; background: radial-gradient(circle, #b4b4b4 .7px, transparent 1px) center / 3px 3px repeat-x; }
.layers { flex: 1; min-height: 0; display: flex; flex-direction: column; }
.legend { flex: 1; background: #fff; border: 1px solid #a8a8a8; padding-top: 1px; }
.lg { height: 20px; display: flex; align-items: center; padding-left: 24px; position: relative; white-space: nowrap; }
.lg.h18 { height: 18px; }
.lg .tw { margin-left: -17px; margin-right: 6px; }
.lg.sub { padding-left: 44px; }
.cb { width: 14px; height: 14px; border: 1px solid #9c9c9c; background: #fff; flex: none; display: block; }
.cb svg { width: 12px; height: 12px; display: block; }
.sym { width: 16px; height: 16px; margin-left: 6px; flex: none; border: 1px solid #444; display: block; }
.s-dark { background: #57558a; border-color: #2f2f3f; }
.s-pur { background: #9a7ab8; border-color: #6b5a84; }
.lname { margin-left: 5px; color: #fff; font-weight: 700; text-decoration: underline; }
.lg em { margin-left: 5px; color: #777; font-weight: 700; }
.lg strong { margin-left: 5px; font-weight: 700; }
.gico { width: 16px; height: 16px; margin-left: 6px; }
.sel { background: #0d7bdb; }
.memo { width: 17px; height: 17px; position: absolute; left: 366px; top: 0; }
.sw { width: 18px; height: 18px; margin: 0 5px 0 6px; flex: none; border: 1px solid #444; display: block; }
.s-g { background: #19d867; border-color: #3a6e4a; }
.s-b { background: #4b55e6; border-color: #3c3c6e; }
.s-m { background: #e81f96; border-color: #6e2a56; }
.s-y { background: #d3c95f; border-color: #6c6a3a; }

.map { width: 759px; margin-left: 6px; flex: none; border: 1px solid #a8a8a8; background: #fff; overflow: hidden; }
.mapsvg { display: block; }
.m-black { filter: url(#rnd); }
.m-pink { filter: url(#rnd); }
.m-green { filter: url(#rough); }
.m-black use { fill: #222; stroke: #222; stroke-width: 24px; stroke-linejoin: round; }
.m-pink use { fill: #dd9ea2; stroke: #dd9ea2; stroke-width: 16px; stroke-linejoin: round; }
.m-green use { fill: #6b8f5b; stroke: #8d6f5f; stroke-width: .6px; stroke-linejoin: round; }
.m-line { fill: none; stroke: #7d4a40; stroke-width: 1px; }
.o-brown { fill: #94715a; }
.o-mag { fill: #9c4776; }
.o-red { fill: #d6767c; }
.o-pur { fill: #7b4b97; }
.o-dark { fill: none; stroke: #6f3446; stroke-width: 10px; stroke-linejoin: round; }
.o-black { fill: none; stroke: #222; stroke-width: 14px; stroke-linejoin: round; stroke-linecap: round; }

.right { width: 452px; margin-left: 6px; flex: none; display: flex; flex-direction: column; }
.right .dock-title { padding-left: 4px; padding-right: 2px; }
.tools-r { height: 32px; padding-left: 3.500px; }
.searchbox { height: 21px; flex: none; margin-left: 1px; background: #fff; border: 1px solid #bbb; border-radius: 3px; display: flex; align-items: center; padding: 0 5px 0 7px; }
.sico { width: 15px; height: 15px; flex: none; }
.stext { margin-left: 5px; }
.sclear { width: 16px; height: 12px; margin-left: auto; }
.ptree { flex: 1; margin-left: 1px; background: #fff; border: 1px solid #a8a8a8; padding-top: 1px; }
.ptree li { height: 18px; display: flex; align-items: center; white-space: nowrap; }
.ptree li svg { width: 18px; height: 18px; flex: none; margin-right: 6px; }
.ptree .p0 { padding-left: 5px; }
.ptree .p0 .tw { margin-right: 5px; }
.ptree .p0 svg { margin-right: 5px; }
.ptree .p1 { padding-left: 40px; }
.ptree .pg { height: 16px; padding-left: 25px; margin-bottom: -1px; }
.ptree .pg .tw { margin-right: 2px; }
.ptree .p2 { padding-left: 60px; }

.statusbar { flex: 1; display: flex; align-items: center; font-size: 11px; white-space: nowrap; padding-left: 5px; }
.locator { width: 235px; height: 21px; background: #fff; border: 1px solid #bbb; border-radius: 3px; display: flex; align-items: center; gap: 5px; padding-left: 6px; color: #666; }
.st { flex: none; display: block; }
.ml-auto { margin-left: 541px; }
.w58 { width: 58px; }
.w39 { width: 39px; }
.w27 { width: 27px; }
.w64 { width: 64px; margin-left: 5px; }
.w56 { width: 56px; }
.m10 { margin-left: 10px; }
.m9 { margin-left: 9px; }
.m5 { margin-left: 5px; }
.field { height: 21px; flex: none; background: #fff; border: 1px solid #bbb; border-radius: 3px; display: flex; align-items: center; padding-left: 5px; position: relative; }
.f-coord { width: 103px; padding-left: 7px; }
.f-scale { width: 80px; padding-left: 4px; }
.f-spin { width: 83px; }
.combo { position: absolute; right: 0; top: 0; bottom: 0; width: 19px; border-left: 1px solid #ccc; display: flex; align-items: center; justify-content: center; }
.combo::after { content: ""; border: 4px solid transparent; border-top: 5px solid #666; border-bottom: 0; }
.spin { position: absolute; right: 0; top: 0; bottom: 0; width: 13px; border-left: 1px solid #ccc; background: linear-gradient(#444, #444) center / 7px 1px no-repeat; }
.spin::before { content: ""; position: absolute; left: 2px; top: 4px; border: 4px solid transparent; border-bottom: 4px solid #555; border-top: 0; }
.spin::after { content: ""; position: absolute; left: 2px; bottom: 4px; border: 4px solid transparent; border-top: 4px solid #555; border-bottom: 0; }
.st-ico { width: 20px; height: 20px; margin-left: 2px; flex: none; }
.st-lock { width: 14px; height: 18px; margin: 0 7px 0 12px; flex: none; }
.st-earth { width: 16px; height: 16px; margin-left: 11px; flex: none; }
.st-msg { width: 18px; height: 18px; margin-left: 21px; flex: none; }
.cb.small { width: 13px; height: 13px; margin-left: 7px; }
```
